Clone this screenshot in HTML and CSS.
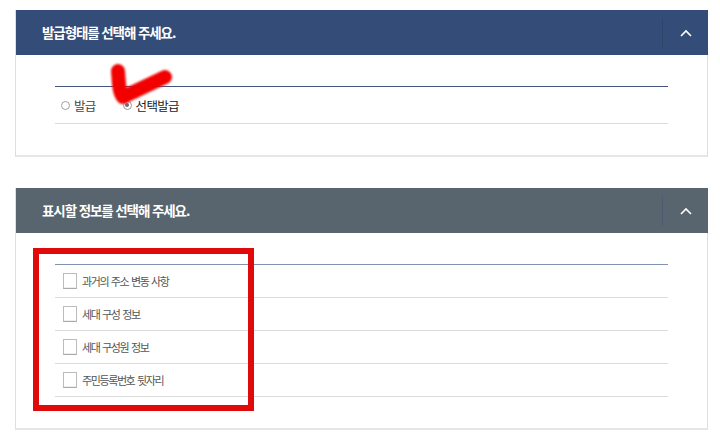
FILE: index.html
```html
<!DOCTYPE html>
<html lang="ko">
<head>
<meta charset="utf-8">
<title>발급형태 선택</title>
<link rel="stylesheet" href="styles.css">
</head>
<body>
<main class="page">
  <section class="panel">
    <header class="panel-head head-navy">
      <h2 class="panel-title">발급형태를 선택해 주세요.</h2>
      <button class="toggle" type="button" aria-label="접기">
        <svg width="12" height="8" viewBox="0 0 12 8"><polyline points="1,7 6,2 11,7" fill="none" stroke="#fff" stroke-width="1.6"/></svg>
      </button>
    </header>
    <div class="panel-body">
      <div class="list list-navy">
        <div class="radio-row">
          <label class="radio"><span class="dot"></span><span class="radio-text">발급</span></label>
          <label class="radio checked"><span class="dot"></span><span class="radio-text strong">선택발급</span></label>
        </div>
      </div>
    </div>
  </section>

  <section class="panel panel-second">
    <header class="panel-head head-slate">
      <h2 class="panel-title">표시할 정보를 선택해 주세요.</h2>
      <button class="toggle toggle-slate" type="button" aria-label="접기">
        <svg width="12" height="8" viewBox="0 0 12 8"><polyline points="1,7 6,2 11,7" fill="none" stroke="#fff" stroke-width="1.6"/></svg>
      </button>
    </header>
    <div class="panel-body">
      <ul class="list list-slate">
        <li class="check-row"><span class="box"></span><span class="check-text">과거의 주소 변동 사항</span></li>
        <li class="check-row"><span class="box"></span><span class="check-text">세대 구성 정보</span></li>
        <li class="check-row"><span class="box"></span><span class="check-text">세대 구성원 정보</span></li>
        <li class="check-row"><span class="box"></span><span class="check-text">주민등록번호 뒷자리</span></li>
      </ul>
    </div>
  </section>

  <svg class="mark" width="80" height="60" viewBox="0 0 80 60" aria-hidden="true">
    <defs><filter id="soft" filterUnits="userSpaceOnUse" x="0" y="0" width="80" height="60"><feGaussianBlur stdDeviation="1"/></filter></defs>
    <path d="M19,14 L20,27 Q21,37 24,40 L66,20" fill="none" stroke="#f20000" stroke-width="14" stroke-linecap="round" stroke-linejoin="round" filter="url(#soft)"/>
  </svg>
  <div class="highlight"></div>
</main>
</body>
</html>
```

FILE: styles.css
```css
* { box-sizing: border-box; }
html, body { margin: 0; padding: 0; background: #fff; }
body {
  font-family: "Noto Sans CJK KR", "Noto Sans", sans-serif;
  color: #444;
}
.page {
  position: relative;
  width: 720px;
  height: 438px;
  padding: 10px 13px 0 15px;
}
.panel {
  border: 1px solid #dedede;
  border-top: none;
  border-bottom: 2px solid #e6e6e6;
  width: 693px;
}
.panel-second { margin-top: 31px; }
.panel-head {
  display: flex;
  align-items: center;
  height: 45px;
  margin: 0 -1px 0 0;
}
.head-navy { background: #344d78; }
.head-slate { background: #59656e; }
.panel-title {
  flex: 1;
  margin: 0;
  padding-left: 26px;
  font-size: 13.5px;
  font-weight: bold;
  color: #fff;
  letter-spacing: -1.1px;
  line-height: 1;
}
.toggle {
  width: 46px;
  height: 30px;
  border: 0;
  border-left: 1px solid #2f456c;
  background: transparent;
  padding: 0;
  display: flex;
  align-items: center;
  justify-content: center;
}
.toggle-slate { border-left-color: #4c5a75; }
.panel-body { padding: 31px 39px 31px 39px; }
.list {
  margin: 0;
  padding: 0;
  list-style: none;
}
.list-navy { border-top: 1px solid #44567f; border-bottom: 1px solid #dcdcdc; }
.list-slate { border-top: 1px solid #8093b1; }
.radio-row {
  display: flex;
  align-items: center;
  height: 36px;
  padding-left: 6px;
  gap: 27px;
}
.radio {
  display: flex;
  align-items: center;
  gap: 4px;
  font-size: 12.5px;
  letter-spacing: -0.7px;
}
.dot {
  width: 9px;
  height: 9px;
  border: 1px solid #a0a0a0;
  border-radius: 50%;
  background: #fff;
  position: relative;
}
.radio.checked .dot { border-color: #9a9a9a; }
.radio.checked .dot::after {
  content: "";
  position: absolute;
  left: 1.5px; top: 1.5px;
  width: 4px; height: 4px;
  border-radius: 50%;
  background: #6e6e6e;
}
.radio-text { color: #444; }
.radio-text.strong { color: #222; }
.check-row {
  display: flex;
  align-items: center;
  height: 33px;
  border-bottom: 1px solid #dcdcdc;
  padding-left: 8px;
  gap: 5px;
}
.box {
  width: 14px;
  height: 16px;
  border: 1px solid #bcbcbc;
  border-bottom-color: #a9a9a9;
  background: #fff;
  box-shadow: inset 0 -1px 0 #eee;
}
.check-text {
  font-size: 11px;
  color: #555;
  letter-spacing: -1.4px;
  word-spacing: 1px;
}
.mark {
  position: absolute;
  left: 99px;
  top: 57px;
}
.highlight {
  position: absolute;
  left: 33px;
  top: 248px;
  width: 221px;
  height: 163px;
  border: 6px solid #e10a0a;
}
```
